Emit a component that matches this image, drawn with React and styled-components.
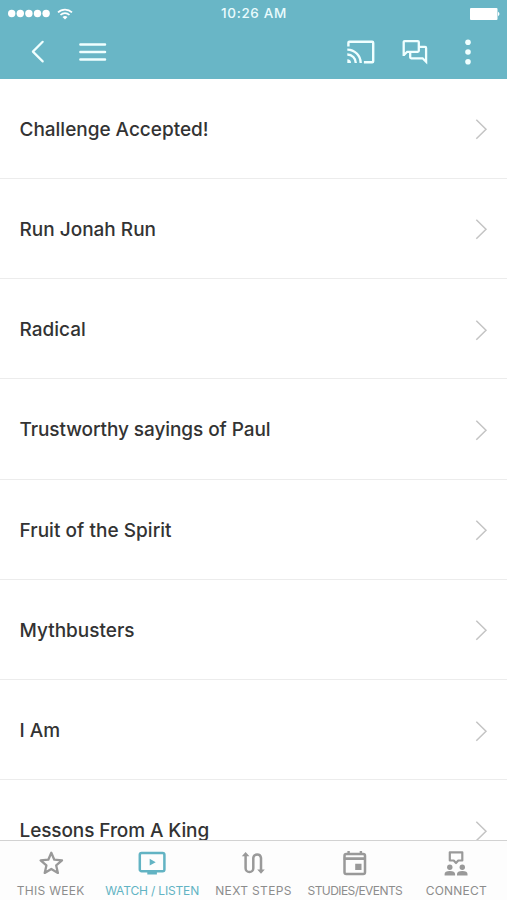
import React from 'react'
import styled, { createGlobalStyle } from 'styled-components'

const GlobalStyle = createGlobalStyle`
    * {
        box-sizing: border-box;
    }
    body {
        margin: 0;
        background-color: white;
        font-family: Inter, "Liberation Sans", sans-serif;
    }
`;

const Screen = styled.div`
    width: 507px;
    height: 900px;
    display: flex;
    flex-direction: column;
    overflow: hidden;
    background-color: white;
`;

const Header = styled.header`
    flex: none;
    height: 78.6px;
    background-color: #69b6c6;
    color: white;
`;

const StatusBar = styled.div`
    height: 27px;
    padding: 0 7px 0 8px;
    display: grid;
    grid-template-columns: 1fr auto 1fr;
    align-items: center;
`;

const Signal = styled.div`
    display: flex;
    align-items: center;
    gap: 7px;
`;

const Time = styled.span`
    font-size: 13.5px;
    font-weight: 500;
    line-height: 27px;
    letter-spacing: ${({ $spacing }) => $spacing}px;
    color: #e9fbfd;
`;

const Battery = styled.svg`
    justify-self: end;
    display: block;
`;

const NavBar = styled.div`
    height: 50px;
    padding: 0 32px 0 26px;
    display: flex;
    align-items: center;
    justify-content: space-between;
`;

const NavGroup = styled.div`
    display: flex;
    align-items: center;
    gap: ${({ $gap }) => $gap}px;
`;

const IconButton = styled.button`
    border: none;
    padding: 0;
    background: none;
    color: #f0ffff;
    cursor: pointer;
    display: flex;
`;

const MoreButton = styled(IconButton)`
    margin-left: 6px;
`;

const List = styled.ul`
    flex: 1;
    min-height: 0;
    margin: 0;
    padding: 0;
    list-style: none;
    overflow: hidden;
`;

const Row = styled.li`
    height: 100.25px;
    padding: 2px 19px 0 19.5px;
    display: flex;
    align-items: center;
    justify-content: space-between;
    border-bottom: 1px solid #ececec;
`;

const RowTitle = styled.span`
    padding-top: 1px;
    color: #333;
    font-size: 19px;
    font-weight: 500;
    line-height: 24px;
    letter-spacing: ${({ $spacing }) => $spacing}px;
    white-space: nowrap;
`;

const TabBar = styled.nav`
    flex: none;
    height: 60px;
    display: grid;
    grid-template-columns: repeat(5, 1fr);
    border-top: 1px solid #d2d2d2;
    background-color: #fdfdfd;
`;

const Tab = styled.button`
    border: none;
    padding: 8px 0 0;
    min-width: 0;
    background: none;
    color: ${({ $active }) => ($active ? '#62b3c3' : '#999')};
    font-family: inherit;
    cursor: pointer;
    display: flex;
    flex-direction: column;
    align-items: center;
    gap: 6px;
`;

const TabLabel = styled.span`
    font-size: 12px;
    line-height: 16px;
    letter-spacing: ${({ $spacing }) => $spacing}px;
    white-space: nowrap;
    color: ${({ $active }) => ($active ? '#62b3c3' : '#8c8c8c')};
`;

const series = [
  { title: 'Challenge Accepted!', spacing: -0.02 },
  { title: 'Run Jonah Run', spacing: 0 },
  { title: 'Radical', spacing: 0 },
  { title: 'Trustworthy sayings of Paul', spacing: -0.08 },
  { title: 'Fruit of the Spirit', spacing: 0.04 },
  { title: 'Mythbusters', spacing: 0 },
  { title: 'I Am', spacing: 0 },
  { title: 'Lessons From A King', spacing: -0.1 },
];

const Dots = () => (
  <svg width="42" height="9" viewBox="0 0 42 9" fill="currentColor">
    {[3.7, 12.3, 20.9, 29.5, 38.1].map((x) => (
      <circle key={x} cx={x} cy="4.5" r="3.7" />
    ))}
  </svg>
)

const Wifi = () => (
  <svg width="16" height="12" viewBox="0 0 16 12" fill="none" stroke="currentColor" strokeWidth="1.7">
    <path d="M1 4.4a10 10 0 0 1 14 0M3.5 7a6.4 6.4 0 0 1 9 0" />
    <path d="M8 11.6 5.5 9.1a3.6 3.6 0 0 1 5 0z" fill="currentColor" stroke="none" />
  </svg>
)

const BackIcon = () => (
  <svg width="24" height="26" viewBox="0 0 24 26" fill="none" stroke="currentColor" strokeWidth="2.2" strokeLinecap="round" strokeLinejoin="round">
    <path d="M16.7 2.8 6.9 12.6l9.8 9.8" />
  </svg>
)

const MenuIcon = () => (
  <svg width="28" height="26" viewBox="0 0 28 26" fill="none" stroke="currentColor" strokeWidth="2.5" strokeLinecap="round">
    <path d="M1.4 5.6h24.6M1.4 13.1h24.6M1.4 20.5h24.6" />
  </svg>
)

const CastIcon = () => (
  <svg width="28" height="24" viewBox="0 0 28 24" fill="none" stroke="currentColor" strokeWidth="2.4">
    <path d="M1.4 6.6V2.8q0-1 1-1h22.8q1 0 1 1v18.4q0 1-1 1h-8.3" />
    <path d="M.3 9.6a13.4 13.4 0 0 1 13.4 13.4M.3 14.5a8.5 8.5 0 0 1 8.5 8.5" />
    <path d="M.3 19.3a3.7 3.7 0 0 1 3.7 3.7H.3z" fill="currentColor" stroke="none" />
  </svg>
)

const ChatIcon = () => (
  <svg width="26" height="26" viewBox="0 0 26 26" fill="none" stroke="currentColor" strokeWidth="2.3" strokeLinejoin="miter">
    <path d="M1.7 17V3.1q0-1 1-1h13.1q1 0 1 1v8.7q0 1-1 1H5.2L1.7 16.3" />
    <path d="M16.8 7.9h6.3q1 0 1 1v13.8l-3.5-3.4H9.2q-1 0-1-1v-5.5" />
  </svg>
)

const MoreIcon = () => (
  <svg width="14" height="28" viewBox="0 0 14 28" fill="currentColor">
    <circle cx="7" cy="4.3" r="2.8" />
    <circle cx="7" cy="14" r="2.8" />
    <circle cx="7" cy="23.8" r="2.8" />
  </svg>
)

const RowArrow = () => (
  <svg width="13" height="22" viewBox="0 0 13 22" fill="none" stroke="#c4c4c4" strokeWidth="1.5">
    <path d="M1.3 1.7 11 11.2l-9.7 9.5" />
  </svg>
)

const StarIcon = () => (
  <svg width="28" height="28" viewBox="0 0 28 28" fill="none" stroke="currentColor" strokeWidth="2.3" strokeLinejoin="round">
    <path d="m14.3 3.7 3 7 7.7.7-5.8 5 1.7 7.5-6.6-4-6.6 4 1.7-7.5-5.8-5 7.7-.7z" />
  </svg>
)

const WatchIcon = () => (
  <svg width="28" height="28" viewBox="0 0 28 28">
    <rect x="1.8" y="4" width="24.6" height="18.2" rx="1.8" fill="none" stroke="currentColor" strokeWidth="2.5" />
    <path d="M9.3 22h9.6v3.4H9.3zM11.7 9.8l6 3.4-6 3.4z" fill="currentColor" />
  </svg>
)

const StepsIcon = () => (
  <svg width="28" height="28" viewBox="0 0 28 28" fill="none" stroke="currentColor" strokeWidth="2.5">
    <path d="M6.6 6v13.2a3.8 3.8 0 0 0 7.7 0V8.9a3.9 3.9 0 0 1 7.7 0v12" />
    <path d="m6.6 3.1 3.8 4.2H2.8zM22 24.8l-3.8-4.2h7.6z" fill="currentColor" stroke="none" />
  </svg>
)

const CalendarIcon = () => (
  <svg width="28" height="28" viewBox="0 0 28 28">
    <rect x="3.5" y="5" width="20.5" height="20.1" rx="1.8" fill="none" stroke="currentColor" strokeWidth="2.5" />
    <path d="M2.7 8.2h22v2.7h-22zM6.4 1.9h2.4V6H6.4zM18.7 1.9h2.4V6h-2.4zM14.2 14.8h6.3V21h-6.3z" fill="currentColor" />
  </svg>
)

const ConnectIcon = () => (
  <svg width="28" height="28" viewBox="0 0 28 28" fill="currentColor">
    <path d="M7.8 3.3h12.5v8.2h-4L14 14l-2.3-2.5H7.8z" fill="none" stroke="currentColor" strokeWidth="2.2" strokeLinejoin="round" />
    <circle cx="7.8" cy="18.2" r="2.7" />
    <circle cx="20.3" cy="18.2" r="2.7" />
    <path d="M2.6 26.5v-1.4q0-3 5.2-3t5.3 3v1.4zM15 26.5v-1.4q0-3 5.3-3t5.2 3v1.4z" />
  </svg>
)

const tabs = [
  { label: 'THIS WEEK', icon: StarIcon, spacing: 0.3 },
  { label: 'WATCH / LISTEN', icon: WatchIcon, spacing: -0.17, active: true },
  { label: 'NEXT STEPS', icon: StepsIcon, spacing: 0.35 },
  { label: 'STUDIES/EVENTS', icon: CalendarIcon, spacing: -0.57 },
  { label: 'CONNECT', icon: ConnectIcon, spacing: 0.2 },
];

const App = () => {
  return (
    <Screen>
        <GlobalStyle/>
        <Header>
            <StatusBar>
                <Signal>
                    <Dots/>
                    <Wifi/>
                </Signal>
                <Time $spacing={0.65}>10:26 AM</Time>
                <Battery width="30" height="12" viewBox="0 0 30 12" fill="white">
                    <rect x="0" y="0" width="27.5" height="12" rx="1" />
                    <path d="M28 3.8q3 2.2 0 4.4z" />
                </Battery>
            </StatusBar>
            <NavBar>
                <NavGroup $gap={29}>
                    <IconButton aria-label="Back"><BackIcon/></IconButton>
                    <IconButton aria-label="Menu"><MenuIcon/></IconButton>
                </NavGroup>
                <NavGroup $gap={27}>
                    <IconButton aria-label="Cast"><CastIcon/></IconButton>
                    <IconButton aria-label="Messages"><ChatIcon/></IconButton>
                    <MoreButton aria-label="More"><MoreIcon/></MoreButton>
                </NavGroup>
            </NavBar>
        </Header>
        <List>
            {series.map((item) => (
                <Row key={item.title}>
                    <RowTitle $spacing={item.spacing}>{item.title}</RowTitle>
                    <RowArrow/>
                </Row>
            ))}
        </List>
        <TabBar>
            {tabs.map(({ label, icon: Icon, spacing, active }) => (
                <Tab key={label} $active={active}>
                    <Icon/>
                    <TabLabel $spacing={spacing} $active={active}>{label}</TabLabel>
                </Tab>
            ))}
        </TabBar>
    </Screen>
  )
}

export default App
